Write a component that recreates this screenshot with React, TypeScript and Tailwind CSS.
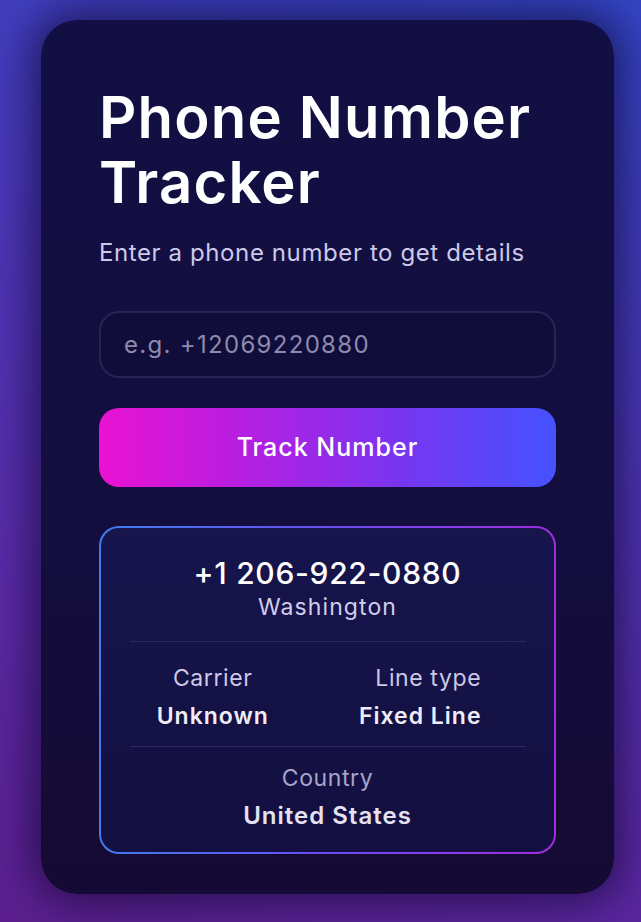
export default function App() {
  return (
    <div
      className="min-h-[922px] w-full bg-[linear-gradient(200deg,#3345c4_0%,#4a38b8_35%,#5a2aa6_70%,#5c1f8e_100%)] pt-[20px] pb-[28px]"
      style={{ fontFamily: "Inter, 'Noto Sans', sans-serif" }}
    >
      <div className="ml-[41px] h-[874px] w-[573px] rounded-[36px] bg-[linear-gradient(180deg,#120f44_0%,#130e3e_60%,#150a33_100%)] px-[58px] pt-[65px] shadow-[0_0_40px_10px_rgba(10,5,40,0.6)]">
        <h1 className="text-[58px] font-semibold leading-[65px] tracking-[1.2px] text-white">
          Phone Number Tracker
        </h1>
        <p className="mt-[24px] text-[24px] leading-[28px] tracking-[0.6px] text-[#cdc9e8]">
          Enter a phone number to get details
        </p>

        <div className="mt-[44px] flex h-[67px] items-center rounded-[20px] border-2 border-[#262453] bg-[#100d3b] px-[23px]">
          <input
            className="w-full bg-transparent text-[24px] tracking-[1.3px] text-white outline-none placeholder:text-[#8e8aac]"
            placeholder="e.g. +12069220880"
          />
        </div>

        <button className="mt-[30px] flex h-[79px] w-full items-center justify-center rounded-[20px] bg-[linear-gradient(90deg,#ea12d2_0%,#b81ee0_30%,#7a35f0_65%,#4552ff_100%)] text-[25px] font-medium tracking-[1px] text-white">
          Track Number
        </button>

        <div className="mt-[39px] rounded-[20px] bg-[linear-gradient(90deg,#3f7cf0,#6a4ef0,#a12ce0)] p-[2px]">
          <div className="rounded-[18px] bg-[linear-gradient(180deg,#16154c_0%,#130f40_100%)] pt-[27px] pb-[22px] text-center">
            <div className="text-[30px] font-medium leading-[36px] tracking-[0.7px] text-white">
              +1 206-922-0880
            </div>
            <div className="mt-[2px] text-[23px] leading-[28px] tracking-[1.1px] text-[#d2cdea]">
              Washington
            </div>
            <div className="ml-[29px] mr-[28px] mt-[20px] h-px bg-[#2c2a5e]" />
            <div className="grid grid-cols-2 pt-[22px] pb-[16px] pl-[8px] pr-[30px]">
              <div>
                <div className="text-[23px] leading-[28px] tracking-[0.6px] text-[#cdc9e6]">Carrier</div>
                <div className="mt-[10px] text-[23px] font-semibold leading-[28px] tracking-[1px] text-[#eeecf8]">
                  Unknown
                </div>
              </div>
              <div>
                <div className="pl-[16px] text-[23px] leading-[28px] tracking-[0.6px] text-[#cdc9e6]">Line type</div>
                <div className="mt-[10px] text-[23px] font-semibold leading-[28px] tracking-[1px] text-[#eeecf8]">
                  Fixed Line
                </div>
              </div>
            </div>
            <div className="ml-[29px] mr-[28px] h-px bg-[#2c2a5e]" />
            <div className="pt-[17px]">
              <div className="text-[23px] leading-[28px] tracking-[0.6px] text-[#a8a4c8]">Country</div>
              <div className="mt-[10px] text-[24px] font-semibold leading-[28px] tracking-[1px] text-[#e4e2f2]">
                United States
              </div>
            </div>
          </div>
        </div>
      </div>
    </div>
  );
}
